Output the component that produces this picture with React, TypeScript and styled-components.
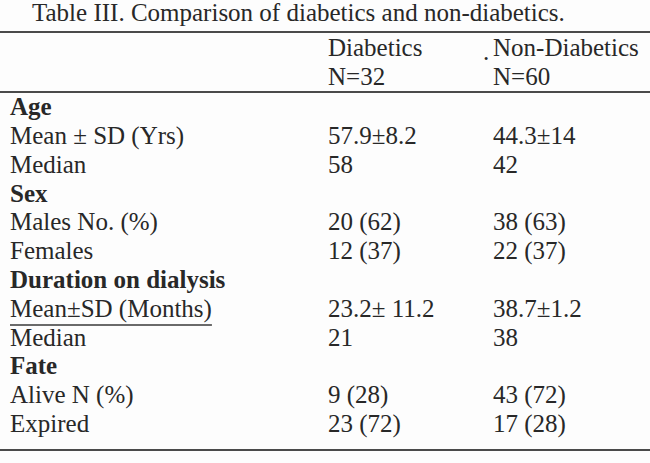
import React from "react";
import styled, { createGlobalStyle } from "styled-components";

const GlobalStyle = createGlobalStyle`
  html, body {
    margin: 0;
    padding: 0;
    background: #ffffff;
  }
  body {
    font-family: "Liberation Serif", "Times New Roman", serif;
    color: #282828;
  }
`;

const Page = styled.div`
  width: 650px;
  height: 463px;
  overflow: hidden;
  background: #fdfdfd;
  font-size: 25px;
`;

const Title = styled.div`
  padding-left: 32px;
  line-height: 26px;
  height: 26px;
  white-space: nowrap;
`;

const Rule = styled.div<{ $top: number }>`
  height: 2px;
  background: #4a4a4a;
  margin-top: ${(p) => p.$top}px;
`;

const Grid = styled.div`
  display: grid;
  grid-template-columns: 318px 165px 1fr;
  padding-left: 10px;
`;

const Header = styled(Grid)`
  padding-top: 1.3px;
  line-height: 28.5px;
`;

const Body = styled(Grid)`
  line-height: 28.8px;
  padding-bottom: 10px;
`;

const Cell = styled.div<{ $bold?: boolean }>`
  white-space: nowrap;
  font-weight: ${(p) => (p.$bold ? 700 : 400)};
`;

const Dot = styled.span`
  display: inline-block;
  line-height: 0;
  margin-left: -10px;
  margin-right: 3.75px;
  vertical-align: -4px;
`;

const Underlined = styled.span`
  text-decoration: underline;
  text-decoration-color: #6a6a6a;
  text-decoration-thickness: 2px;
  text-underline-offset: 7px;
`;

type Row = {
  label: React.ReactNode;
  bold?: boolean;
  a?: string;
  b?: string;
};

const rows: Row[] = [
  { label: "Age", bold: true },
  { label: "Mean ± SD (Yrs)", a: "57.9±8.2", b: "44.3±14" },
  { label: "Median", a: "58", b: "42" },
  { label: "Sex", bold: true },
  { label: "Males No. (%)", a: "20 (62)", b: "38 (63)" },
  { label: "Females", a: "12 (37)", b: "22 (37)" },
  { label: "Duration on dialysis", bold: true },
  {
    label: <Underlined>Mean±SD (Months)</Underlined>,
    a: "23.2± 11.2",
    b: "38.7±1.2",
  },
  { label: "Median", a: "21", b: "38" },
  { label: "Fate", bold: true },
  { label: "Alive N (%)", a: "9 (28)", b: "43 (72)" },
  { label: "Expired", a: "23 (72)", b: "17 (28)" },
];

export default function App() {
  return (
    <Page>
      <GlobalStyle />
      <Title>Table III. Comparison of diabetics and non-diabetics.</Title>
      <Rule $top={5} />
      <Header>
        <Cell />
        <Cell>
          Diabetics
          <br />
          N=32
        </Cell>
        <Cell>
          <Dot>.</Dot>Non-Diabetics
          <br />
          N=60
        </Cell>
      </Header>
      <Rule $top={0} />
      <Body>
        {rows.map((r, i) => (
          <React.Fragment key={i}>
            <Cell $bold={r.bold}>{r.label}</Cell>
            <Cell>{r.a ?? ""}</Cell>
            <Cell>{r.b ?? ""}</Cell>
          </React.Fragment>
        ))}
      </Body>
      <Rule $top={0} />
    </Page>
  );
}
